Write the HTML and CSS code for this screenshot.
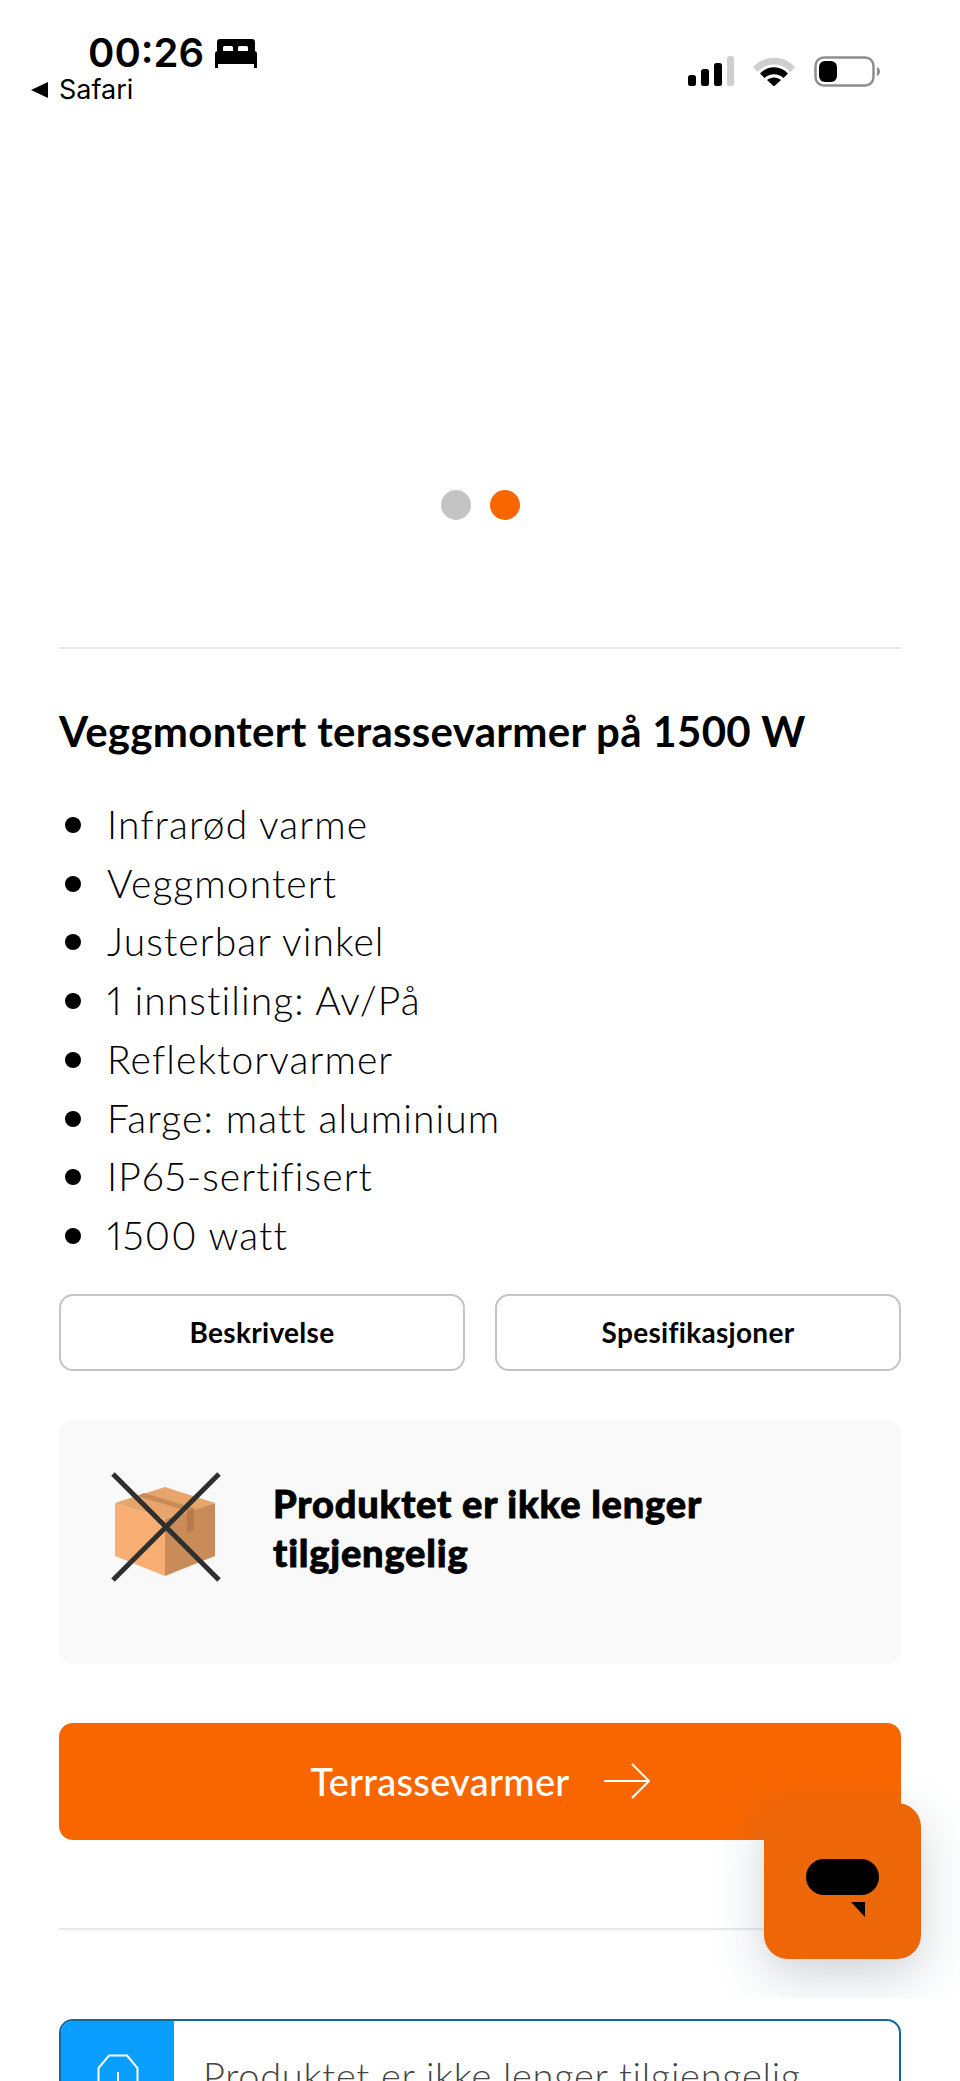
FILE: index.html
```html
<!DOCTYPE html>
<html lang="no">
<head>
    <meta charset="UTF-8">
    <meta name="viewport" content="width=device-width, initial-scale=1.0">
    <title>Veggmontert terassevarmer</title>
    <link rel="stylesheet" href="styles.css">
</head>
<body>
    <div class="status">
        <div class="status-left">
            <div class="clock">
                <span class="time">00:26</span>
                <svg class="bed" viewBox="0 0 42 29"><path d="M5 0h32a3 3 0 0 1 3 3v9h-7V8.500a1.500 1.500 0 0 0-1.500-1.500h-7a1.500 1.500 0 0 0-1.500 1.500V12h-5V8.500A1.500 1.500 0 0 0 16.500 7h-7A1.500 1.500 0 0 0 8 8.500V12H2V3a3 3 0 0 1 3-3zM3 12h36a3 3 0 0 1 3 3v14h-3v-4H3v4H0V15a3 3 0 0 1 3-3z"/></svg>
            </div>
            <div class="back"><span class="back-arrow"></span>Safari</div>
        </div>
        <div class="status-right">
            <svg class="signal" viewBox="0 0 46 30">
                <rect x="0" y="19" width="8" height="11" rx="2.500"/>
                <rect x="13" y="13" width="8" height="17" rx="2.500"/>
                <rect x="26" y="7" width="8" height="23" rx="2.500"/>
                <rect x="39" y="0" width="7" height="30" rx="2.500" fill="#cfcfcf"/>
            </svg>
            <svg class="wifi" viewBox="0 0 42 30">
                <path d="M0 11C11-1.500 31-1.500 42 11l-4.500 5C28 6 14 6 4.500 16z" fill="#cfcfcf"/>
                <path d="M7 17.500c8-8.500 20-8.500 28 0l-4.500 4.500c-5.500-5-13.500-5-19 0z"/>
                <path d="M14 24c4-3.500 10-3.500 14 0l-7 6.500z"/>
            </svg>
            <svg class="battery" viewBox="0 0 66 31">
                <rect x="1.500" y="1.500" width="58" height="28" rx="8.500" fill="none" stroke="#8e8e8e" stroke-width="2.500"/>
                <rect x="5" y="5" width="18" height="21" rx="6"/>
                <path d="M63 11c2 1 3 2.500 3 4.500s-1 3.500-3 4.500z" fill="#8e8e8e"/>
            </svg>
        </div>
    </div>

    <div class="gallery">
        <span class="dot"></span>
        <span class="dot active"></span>
    </div>

    <main class="content">
        <hr class="rule">
        <h1 class="title">Veggmontert terassevarmer på 1500 W</h1>
        <ul class="features">
            <li>Infrarød varme</li>
            <li>Veggmontert</li>
            <li>Justerbar vinkel</li>
            <li>1 innstiling: Av/På</li>
            <li>Reflektorvarmer</li>
            <li>Farge: matt aluminium</li>
            <li>IP65-sertifisert</li>
            <li>1500 watt</li>
        </ul>
        <div class="tabs">
            <button class="tab">Beskrivelse</button>
            <button class="tab">Spesifikasjoner</button>
        </div>
        <div class="notice">
            <svg class="box-icon" viewBox="0 0 112 112">
                <path d="M55 16 105 32 55 48 5 32z" fill="#e8a56b"/>
                <path d="M5 32 55 48V105L5 85z" fill="#f9af73"/>
                <path d="M105 32 55 48V105L105 85z" fill="#c98c58"/>
                <path d="M27 25 77 40 84 37 34 22z" fill="#c98c58"/>
                <path d="M77 40 84 37V59L77 62z" fill="#b9794a"/>
                <path d="M3 3 109 109M109 3 3 109" stroke="#2f2f2f" stroke-width="5" fill="none"/>
            </svg>
            <p class="notice-text">Produktet er ikke lenger tilgjengelig</p>
        </div>
        <a class="cta" href="#">
            <span>Terrassevarmer</span>
            <svg class="cta-arrow" viewBox="0 0 46 36"><path d="M0 18H44M28 1 45 18 28 35" fill="none" stroke="#fff" stroke-width="2"/></svg>
        </a>
        <hr class="rule rule-lower">
        <div class="alert">
            <div class="alert-side">
                <svg class="alert-icon" viewBox="0 0 42 60"><path d="M12 1.500H30L40.500 14V46L30 58.500H12L1.500 46V14z M21 18V38" fill="none" stroke="#fff" stroke-width="2"/></svg>
            </div>
            <p class="alert-text">Produktet er ikke lenger tilgjengelig</p>
        </div>
    </main>

    <div class="chat-clip">
        <button class="chat" aria-label="Chat">
            <svg class="chat-icon" viewBox="0 0 74 58"><rect width="73" height="36" rx="18"/><path d="M45 43H59V58z"/></svg>
        </button>
    </div>
</body>
</html>
```

FILE: styles.css
```css
body {
    font-family: Lato, "Open Sans", sans-serif;
    background-color: #fff;
    color: #000;
    margin: 0;
    padding: 0;
    height: 2081px;
    overflow: hidden;
    position: relative;
}
.status {
    display: flex;
    justify-content: space-between;
    height: 130px;
    padding: 0 80px 0 31px;
    font-family: Inter, sans-serif;
}
.status-left {
    padding-top: 32px;
}
.clock {
    display: flex;
    align-items: center;
    gap: 11px;
    margin-left: 57px;
    height: 42px;
}
.time {
    font-size: 40px;
    font-weight: 600;
    line-height: 42px;
}
.bed {
    width: 42px;
    height: 29px;
}
.back {
    display: flex;
    align-items: center;
    gap: 11px;
    font-size: 27px;
    line-height: 30px;
    margin-top: 1px;
}
.back-arrow {
    width: 0;
    height: 0;
    border-style: solid;
    border-width: 8px 17px 8px 0;
    border-color: transparent #000 transparent transparent;
}
.status-right {
    display: flex;
    align-items: flex-start;
    gap: 19px;
    padding-top: 56px;
}
.signal {
    width: 46px;
    height: 30px;
}
.wifi {
    width: 42px;
    height: 30px;
}
.battery {
    width: 66px;
    height: 31px;
}
.gallery {
    display: flex;
    justify-content: center;
    gap: 19px;
    height: 517px;
    padding-top: 360px;
    box-sizing: border-box;
}
.dot {
    width: 30px;
    height: 30px;
    border-radius: 50%;
    background-color: #c4c4c4;
}
.dot.active {
    background-color: #f96600;
}
.content {
    padding: 0 59px;
}
.rule {
    border: 0;
    border-top: 2px solid #e9e9e9;
    margin: 0;
}
.title {
    font-size: 42px;
    font-weight: 700;
    line-height: 50px;
    letter-spacing: 0.3px;
    margin: 57px 0 0;
}
.features {
    list-style: none;
    margin: 39px 0 0;
    padding: 0;
    font-size: 39px;
    font-weight: 300;
    font-variant-numeric: proportional-nums;
    line-height: 58.700px;
    letter-spacing: 1.1px;
}
.features li {
    position: relative;
    padding-left: 48px;
}
.features li::before {
    content: "";
    position: absolute;
    left: 6px;
    top: 22px;
    width: 16px;
    height: 16px;
    border-radius: 50%;
    background-color: #000;
}
.tabs {
    display: grid;
    grid-template-columns: 1fr 1fr;
    gap: 30px;
    margin-top: 29px;
}
.tab {
    height: 77px;
    background-color: #fff;
    border: 2.500px solid #c4c4c4;
    border-radius: 14px;
    font-family: inherit;
    font-size: 28px;
    font-weight: 700;
    letter-spacing: 0.3px;
    color: #000;
}
.notice {
    display: flex;
    align-items: flex-start;
    height: 244px;
    margin-top: 49px;
    padding: 51px 0 0 51px;
    box-sizing: border-box;
    background-color: #f9f9f9;
    border-radius: 14px;
}
.box-icon {
    width: 112px;
    height: 112px;
    flex-shrink: 0;
}
.notice-text {
    width: 480px;
    margin: 8px 0 0 51px;
    font-size: 38px;
    font-weight: 900;
    line-height: 49px;
    letter-spacing: 0.8px;
    -webkit-text-stroke: 0.8px #000;
}
.cta {
    display: flex;
    justify-content: center;
    align-items: center;
    gap: 34px;
    height: 117px;
    margin-top: 59px;
    background-color: #f96600;
    border-radius: 14px;
    color: #fff;
    font-size: 38px;
    font-weight: 500;
    letter-spacing: 0.3px;
    text-decoration: none;
}
.cta-arrow {
    width: 46px;
    height: 36px;
}
.rule-lower {
    margin-top: 88px;
}
.alert {
    display: flex;
    height: 200px;
    margin-top: 89px;
    border: 2px solid #0d6b9e;
    border-radius: 14px;
    overflow: hidden;
}
.alert-side {
    width: 113px;
    background-color: #0a9fff;
    text-align: center;
    padding-top: 33px;
    box-sizing: border-box;
}
.alert-icon {
    width: 42px;
    height: 60px;
}
.alert-text {
    margin: 29px 0 0 29px;
    font-size: 38px;
    font-weight: 300;
    line-height: 50px;
    letter-spacing: 0.7px;
    color: #444;
    white-space: nowrap;
}
.chat-clip {
    position: absolute;
    left: 660px;
    top: 1740px;
    width: 300px;
    height: 258px;
    overflow: hidden;
}
.chat {
    position: absolute;
    left: 104px;
    top: 63px;
    display: flex;
    align-items: flex-start;
    width: 157px;
    height: 156px;
    padding: 56px 0 0 42px;
    box-sizing: border-box;
    border: 0;
    border-radius: 24px;
    background-color: #ed6608;
    box-shadow: 0 16px 50px rgba(90, 110, 125, 0.3);
}
.chat-icon {
    width: 74px;
    height: 58px;
}
```
